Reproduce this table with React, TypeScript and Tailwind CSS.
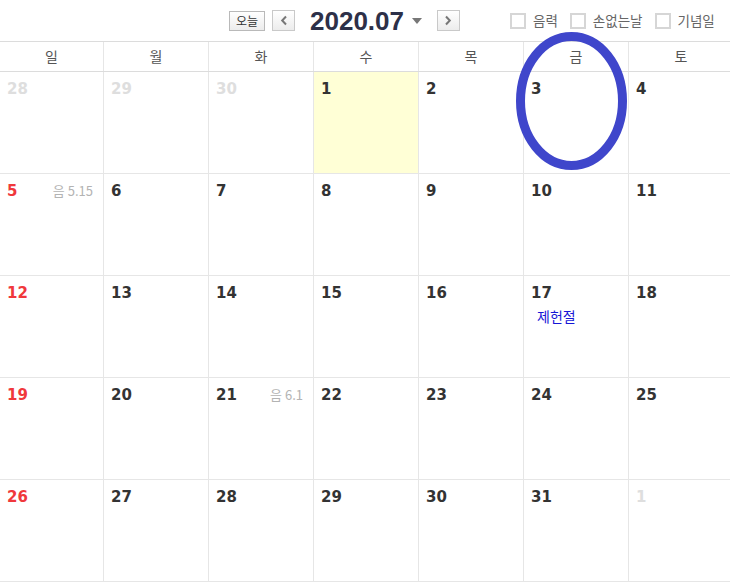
import React from 'react';

type Day = {
  n: number;
  other?: boolean;
  lunar?: string;
  holiday?: string;
  today?: boolean;
};

const weekdays = ['일', '월', '화', '수', '목', '금', '토'];

const weeks: Day[][] = [
  [{ n: 28, other: true }, { n: 29, other: true }, { n: 30, other: true }, { n: 1, today: true }, { n: 2 }, { n: 3 }, { n: 4 }],
  [{ n: 5, lunar: '5.15' }, { n: 6 }, { n: 7 }, { n: 8 }, { n: 9 }, { n: 10 }, { n: 11 }],
  [{ n: 12 }, { n: 13 }, { n: 14 }, { n: 15 }, { n: 16 }, { n: 17, holiday: '제헌절' }, { n: 18 }],
  [{ n: 19 }, { n: 20 }, { n: 21, lunar: '6.1' }, { n: 22 }, { n: 23 }, { n: 24 }, { n: 25 }],
  [{ n: 26 }, { n: 27 }, { n: 28 }, { n: 29 }, { n: 30 }, { n: 31 }, { n: 1, other: true }],
];

const cols = 'grid grid-cols-[104px_repeat(6,105px)] w-[734px]';

function Check({ label }: { label: string }) {
  return (
    <label className="flex items-center gap-[7px]">
      <span className="w-[16px] h-[16px] border-2 border-[#d6d6d6] bg-white" />
      <span>{label}</span>
    </label>
  );
}

function Cell({ day, col }: { day: Day; col: number }) {
  const color = day.other ? 'text-[#dedede]' : col === 0 ? 'text-[#f0383c]' : 'text-[#333333]';
  return (
    <div className={`border-r border-[#e6e6e6] pl-[7px] pr-[8px] pt-[6px] ${day.today ? 'bg-[#ffffd6]' : ''}`}>
      <div className="flex items-baseline justify-between">
        <span className={`text-[15px] font-bold ${color}`} style={{ fontFamily: '"DejaVu Sans", sans-serif' }}>
          {day.n}
        </span>
        {day.lunar && (
          <span className="text-[13px] text-[#b3b3b3] pr-[2px] font-['Noto_Sans_CJK_KR',sans-serif]">
            음 {day.lunar}
          </span>
        )}
      </div>
      {day.holiday && (
        <div className="mt-[1px] pl-[6px] text-[14px] text-[#1616d6] font-['Noto_Sans_CJK_KR',sans-serif]">
          {day.holiday}
        </div>
      )}
    </div>
  );
}

export default function App() {
  return (
    <div className="relative w-[730px] h-[582px] overflow-hidden bg-white font-['Noto_Sans_CJK_KR',sans-serif]">
      <div className="h-[41px] flex items-center">
        <div className="flex items-center ml-[229px]">
          <button className="w-[36px] h-[20px] border border-[#b9b9b9] bg-gradient-to-b from-white to-[#ececec] text-[12px] leading-none text-[#333]">
            오늘
          </button>
          <button className="ml-[7px] w-[23px] h-[21px] border border-[#c9c9c9] bg-gradient-to-b from-white to-[#ececec] flex items-center justify-center">
            <svg width="8" height="11" viewBox="0 0 8 11">
              <path d="M6 1.5 2.2 5.5 6 9.5" fill="none" stroke="#777" strokeWidth="2" />
            </svg>
          </button>
          <span className="ml-[15px] text-[26px] font-bold text-[#2d3048] font-['Liberation_Sans',sans-serif] leading-none">
            2020.07
          </span>
          <svg className="ml-[8px]" width="10" height="6" viewBox="0 0 10 6">
            <path d="M0 0h10L5 6z" fill="#777" />
          </svg>
          <button className="ml-[15px] w-[23px] h-[21px] border border-[#c9c9c9] bg-gradient-to-b from-white to-[#ececec] flex items-center justify-center">
            <svg width="8" height="11" viewBox="0 0 8 11">
              <path d="M2 1.5 5.8 5.5 2 9.5" fill="none" stroke="#777" strokeWidth="2" />
            </svg>
          </button>
        </div>
        <div className="ml-[50px] flex items-center gap-[12px] text-[13.5px] text-[#666]">
          <Check label="음력" />
          <Check label="손없는날" />
          <Check label="기념일" />
        </div>
      </div>

      <div className={`${cols} h-[31px] border-y border-[#dcdcdc]`}>
        {weekdays.map(w => (
          <div key={w} className="border-r border-[#e6e6e6] flex items-center justify-center text-[14px] text-[#555]">
            {w}
          </div>
        ))}
      </div>

      {weeks.map((week, i) => (
        <div key={i} className={`${cols} h-[102px] border-b border-[#e6e6e6]`}>
          {week.map((d, j) => (
            <Cell key={j} day={d} col={j} />
          ))}
        </div>
      ))}

      <svg className="absolute left-[512px] top-[28px]" width="120" height="146" viewBox="0 0 120 146">
        <ellipse cx="59.5" cy="73" rx="51" ry="64.5" fill="none" stroke="#3f46cb" strokeWidth="9" />
      </svg>
    </div>
  );
}
